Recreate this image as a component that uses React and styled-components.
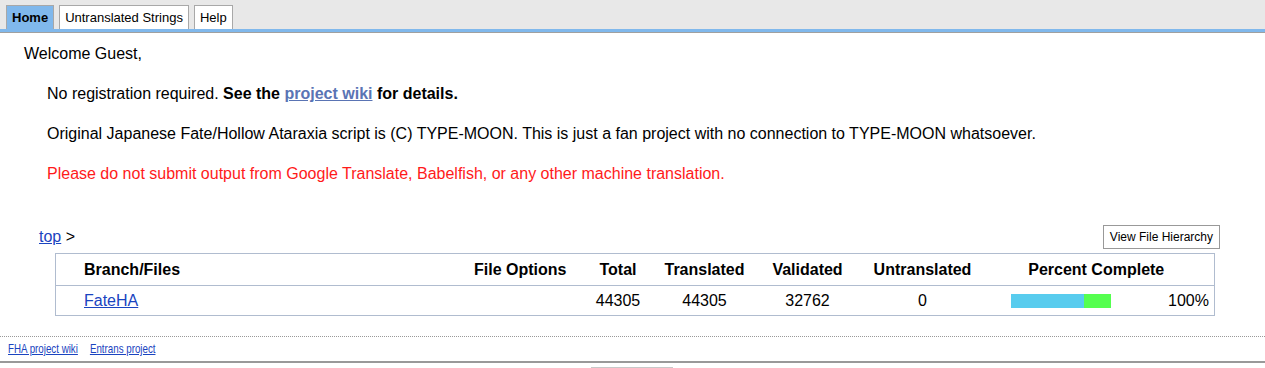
import React from 'react';
import styled, { createGlobalStyle } from 'styled-components';

const GlobalStyle = createGlobalStyle`
  body {
    margin: 0;
    background: #fff;
    font-family: Arial, "Liberation Sans", sans-serif;
    color: #000;
  }
`;

const TabBar = styled.div`
  display: flex;
  align-items: flex-end;
  gap: 5px;
  height: 29px;
  padding-left: 6px;
  background: #e8e8e8;
`;

const Tab = styled.a`
  display: flex;
  align-items: center;
  box-sizing: border-box;
  height: 24px;
  padding: 0 5px;
  border: 1px solid #a8a8a8;
  border-bottom: none;
  font-size: 13px;
  font-weight: ${p => (p.$active ? 'bold' : 'normal')};
  color: #000;
  text-decoration: none;
  background: ${p => (p.$active ? '#80b8ec' : '#fff')};
`;

const TabRule = styled.div`
  height: 3px;
  background: #80b8ec;
  border-bottom: 1px solid #a0a0a0;
`;

const Main = styled.div`
  padding: 12px 24px 0;
`;

const Welcome = styled.div`
  font-size: 16px;
  line-height: 18px;
`;

const Para = styled.p`
  margin: 22px 0 0 23px;
  font-size: 16px;
  line-height: 18px;
  color: ${p => p.$color || '#000'};
`;

const WikiLink = styled.a`
  color: #5a74b4;
  text-decoration: underline;
`;

const NavRow = styled.div`
  display: flex;
  justify-content: space-between;
  align-items: flex-end;
  margin: 42px 21px 4px 15px;
`;

const Crumb = styled.div`
  font-size: 16px;
  line-height: 18px;
  padding-bottom: 3px;
`;

const Link = styled.a`
  color: #1a44c0;
  text-decoration: underline;
`;

const HierarchyButton = styled.button`
  box-sizing: border-box;
  height: 24px;
  padding: 0 6px;
  border: 1px solid #999;
  background: #fff;
  font-family: Arial, "Liberation Sans", sans-serif;
  font-size: 12px;
  color: #000;
`;

const Table = styled.table`
  margin-left: 55px;
  width: 1159px;
  table-layout: fixed;
  border-collapse: collapse;
  border: 1px solid #b0bccf;
  font-size: 16px;
`;

const Th = styled.th`
  height: 31px;
  padding: 0 ${p => p.$pr || 0}px 0 ${p => p.$pl || 0}px;
  text-align: ${p => p.$align || 'center'};
  font-weight: bold;
  border-bottom: 1px solid #b0bccf;
`;

const Td = styled.td`
  height: 29px;
  padding: 0 ${p => p.$pr || 0}px 0 ${p => p.$pl || 0}px;
  text-align: ${p => p.$align || 'center'};
`;

const ProgressCell = styled.div`
  display: flex;
  justify-content: space-between;
  align-items: center;
  padding: 0 5px 0 32px;
`;

const Bar = styled.div`
  display: flex;
  width: 100px;
  height: 14px;
  background: #55ff4f;
`;

const BarFill = styled.div`
  height: 100%;
  background: #58ccee;
`;

const Footer = styled.div`
  margin-top: 20px;
  border-top: 1px dotted #999;
`;

const FooterBar = styled.div`
  padding: 2px 8px 0;
  height: 22px;
  border-bottom: 2px solid #999;
`;

/* the footer font is a condensed face; squeeze Arial to match */
const FooterLinks = styled.div`
  display: inline-flex;
  gap: 16px;
  font-size: 13px;
  transform: scaleX(0.75);
  transform-origin: left center;
`;

const Stub = styled.div`
  margin: 4px 0 0 591px;
  width: 82px;
  height: 8px;
  border-top: 1px solid #c8c8c8;
`;

const rows = [
  { name: 'FateHA', total: 44305, translated: 44305, validated: 32762, untranslated: 0 },
];

export default function App() {
  return (
    <>
      <GlobalStyle />
      <TabBar>
        <Tab $active>Home</Tab>
        <Tab>Untranslated Strings</Tab>
        <Tab>Help</Tab>
      </TabBar>
      <TabRule />
      <Main>
        <Welcome>Welcome Guest,</Welcome>
        <Para>
          No registration required. <b>See the <WikiLink href="#">project wiki</WikiLink> for details.</b>
        </Para>
        <Para>
          Original Japanese Fate/Hollow Ataraxia script is (C) TYPE-MOON. This is just a fan project with no connection to TYPE-MOON whatsoever.
        </Para>
        <Para $color="#ff1a1a">
          Please do not submit output from Google Translate, Babelfish, or any other machine translation.
        </Para>
        <NavRow>
          <Crumb>
            <Link href="#">top</Link> &gt;
          </Crumb>
          <HierarchyButton type="button">View File Hierarchy</HierarchyButton>
        </NavRow>
      </Main>
      <Table>
        <colgroup>
          <col style={{ width: 315 }} />
          <col style={{ width: 205 }} />
          <col style={{ width: 85 }} />
          <col style={{ width: 88 }} />
          <col style={{ width: 118 }} />
          <col style={{ width: 112 }} />
          <col style={{ width: 236 }} />
        </colgroup>
        <thead>
          <tr>
            <Th $align="left" $pl={28}>Branch/Files</Th>
            <Th $align="right" $pr={9}>File Options</Th>
            <Th>Total</Th>
            <Th>Translated</Th>
            <Th>Validated</Th>
            <Th>Untranslated</Th>
            <Th>Percent Complete</Th>
          </tr>
        </thead>
        <tbody>
          {rows.map(r => (
            <tr key={r.name}>
              <Td $align="left" $pl={28}>
                <Link href="#">{r.name}</Link>
              </Td>
              <Td />
              <Td>{r.total}</Td>
              <Td>{r.translated}</Td>
              <Td>{r.validated}</Td>
              <Td>{r.untranslated}</Td>
              <Td>
                <ProgressCell>
                  <Bar>
                    <BarFill style={{ width: `${(r.validated / r.total) * 100}%` }} />
                  </Bar>
                  <span>{Math.round(((r.total - r.untranslated) / r.total) * 100)}%</span>
                </ProgressCell>
              </Td>
            </tr>
          ))}
        </tbody>
      </Table>
      <Footer>
        <FooterBar>
          <FooterLinks>
            <Link href="#">FHA project wiki</Link>
            <Link href="#">Entrans project</Link>
          </FooterLinks>
        </FooterBar>
        <Stub />
      </Footer>
    </>
  );
}
